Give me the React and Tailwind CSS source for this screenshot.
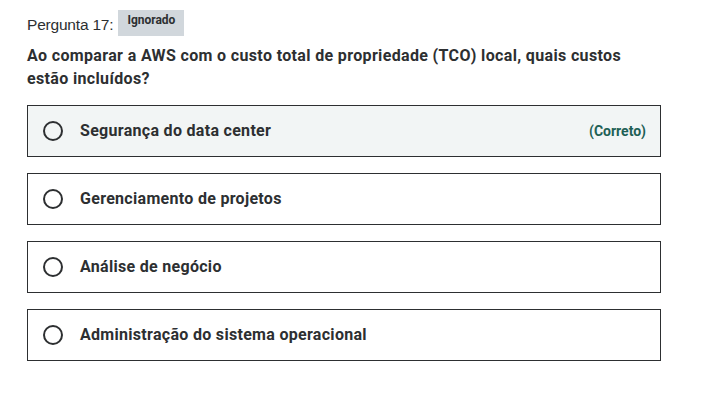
import React from 'react';

const options = [
  { label: 'Segurança do data center', correct: true },
  { label: 'Gerenciamento de projetos' },
  { label: 'Análise de negócio' },
  { label: 'Administração do sistema operacional' },
];

const App = () => {
  return (
    <div className="min-h-screen bg-white pl-[27px] pr-[43px] pt-[10px] text-[#2d2f31] font-['Roboto',sans-serif]">
      {/* Question header */}
      <div className="flex items-start">
        <span className="mt-[4px] text-[15.5px] leading-[22px] font-['Liberation_Sans',sans-serif] tracking-[-0.2px]">
          Pergunta 17:
        </span>
        <span className="ml-[5px] h-[26px] bg-[#d1d7dc] px-[9px] pt-[2px] text-[12px] font-bold leading-[16px]">
          Ignorado
        </span>
      </div>

      <p className="mt-[8px] text-[16px] font-bold leading-[23px] tracking-[0.35px]">
        Ao comparar a AWS com o custo total de propriedade (TCO) local, quais custos estão incluídos?
      </p>

      {/* Answers */}
      <ul className="mt-[15px] flex flex-col gap-[16px]">
        {options.map((opt) => (
          <li
            key={opt.label}
            className={`flex h-[52px] items-center border border-[#2d2f31] pl-[15px] pr-[14px] ${
              opt.correct ? 'bg-[#f2f5f5]' : 'bg-white'
            }`}
          >
            <span className="h-[20px] w-[20px] shrink-0 rounded-full border-2 border-[#2d2f31]" />
            <span className="ml-[17px] flex-1 text-[16px] font-bold leading-[20px] tracking-[0.3px]">{opt.label}</span>
            {opt.correct && (
              <span className="text-[14px] font-bold text-[#1e6055]">(Correto)</span>
            )}
          </li>
        ))}
      </ul>
    </div>
  );
};

export default App;
